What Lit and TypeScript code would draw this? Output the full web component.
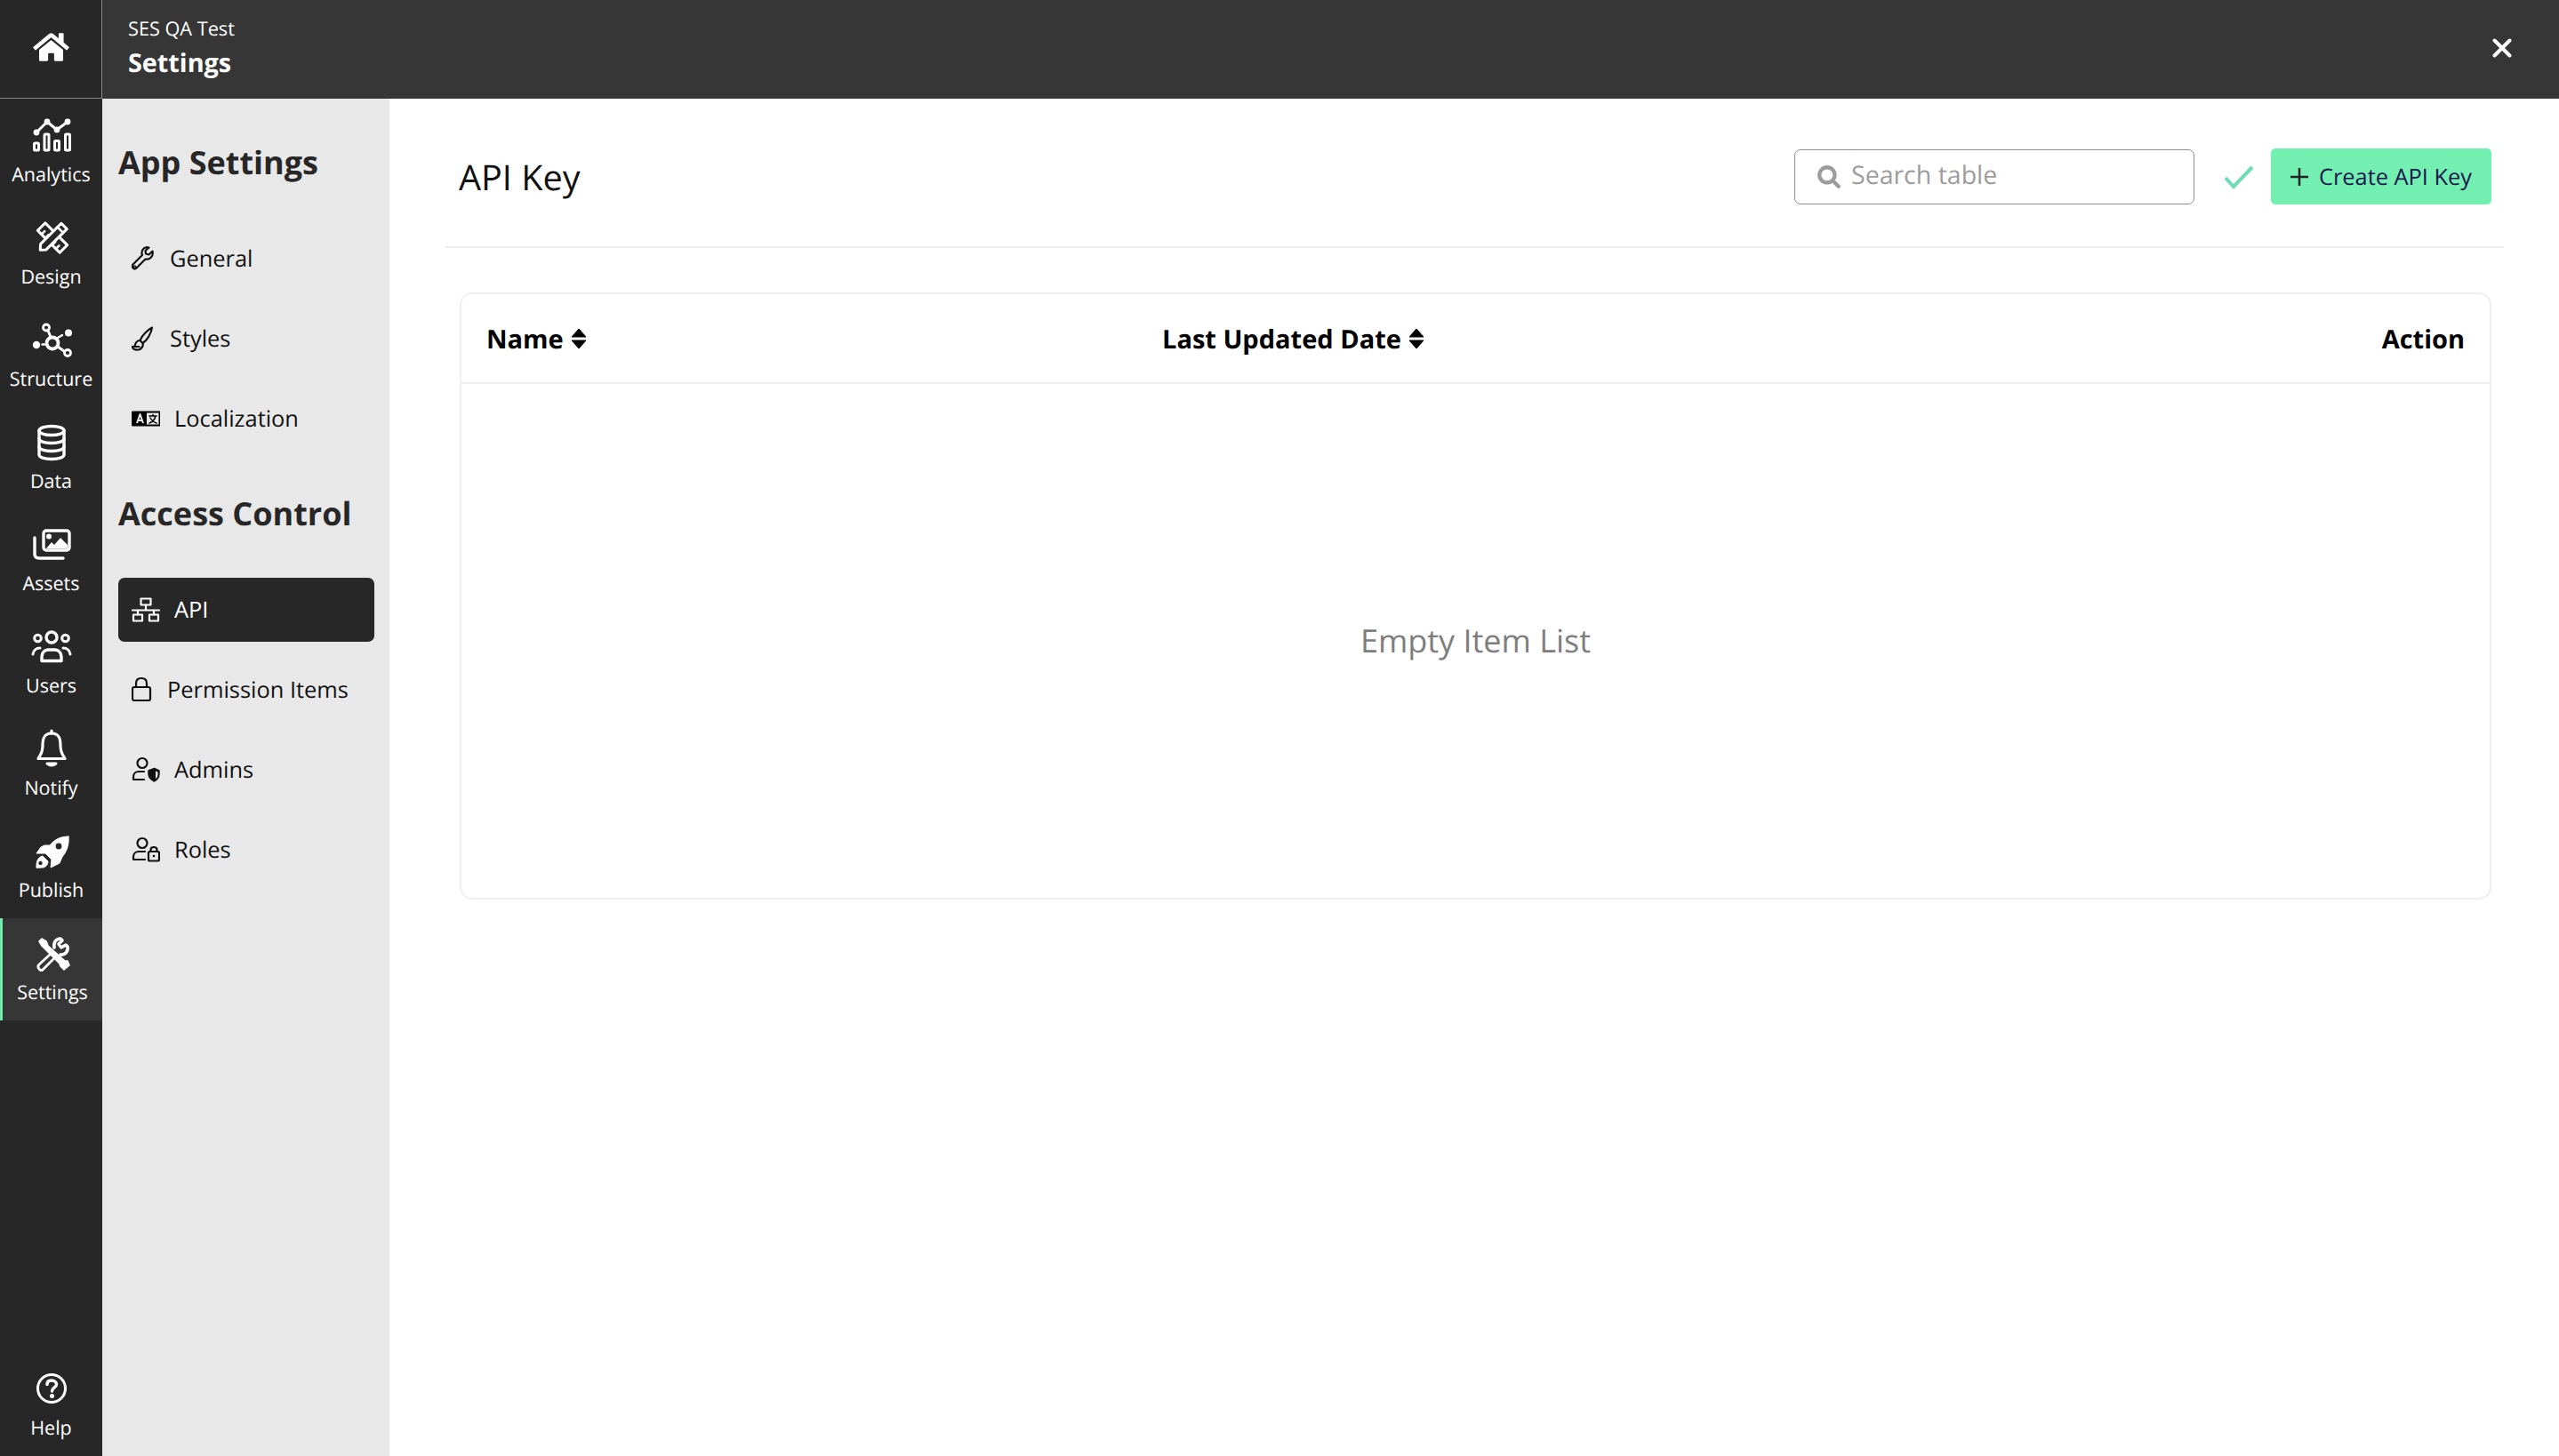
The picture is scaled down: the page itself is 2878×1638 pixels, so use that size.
import { LitElement, html, css, svg } from "lit";
import { customElement } from "lit/decorators.js";

const s = (c: any) => html`<svg class="ri" viewBox="0 0 48 48" width="48" height="48" fill="none" stroke="#fff" stroke-width="3" stroke-linecap="round" stroke-linejoin="round">${c}</svg>`;
const n = (w: number, c: any) => html`<svg class="si" viewBox="0 0 ${w} 30" width="${w}" height="30" fill="none" stroke="currentColor" stroke-width="2.2" stroke-linecap="round" stroke-linejoin="round">${c}</svg>`;

const railIcons: Record<string, any> = {
  Analytics: s(svg`
    <path d="M7 20 19 8 30 17 42 8" stroke-width="3"/>
    <g fill="#fff" stroke="none"><circle cx="7" cy="20" r="3.400"/><circle cx="19" cy="8" r="3.400"/><circle cx="30" cy="17" r="3.400"/><circle cx="42" cy="8" r="3.400"/></g>
    <g stroke-width="3" stroke-linejoin="round"><rect x="4.500" y="32" width="5" height="8" rx="1"/><rect x="16" y="22" width="5" height="18" rx="1"/><rect x="27.500" y="29.500" width="5" height="10.500" rx="1"/><rect x="39.500" y="22" width="5" height="18" rx="1"/></g>`),
  Design: s(svg`
    <g transform="rotate(-45 25 23.500)">
      <rect x="19" y="6" width="12" height="35" stroke-width="3"/>
      <path d="M19 12H24M19 18H24M19 29H24M19 35H24" stroke-width="2.600"/>
    </g>
    <g transform="rotate(-135 25 23.500)">
      <path d="M20.500 9 25 4 29.500 9V42H20.500Z" fill="#272727" stroke-width="3"/>
      <path d="M20.500 36H29.500" stroke-width="2.600"/>
    </g>`),
  Structure: s(svg`
    <circle cx="25" cy="27" r="6.500" stroke-width="3.800"/>
    <circle cx="18" cy="9.500" r="3.500" stroke-width="2.800"/><circle cx="43" cy="15.500" r="4" fill="#fff" stroke="none"/>
    <circle cx="42" cy="38" r="3.500" stroke-width="2.800"/><circle cx="7" cy="29" r="4.200" fill="#fff" stroke="none"/>
    <path d="M20 13 23 20M31 31 38 36" stroke-width="3"/><path d="M31 21 36 18M13.500 28.500H16" stroke-width="2.400"/>`),
  Data: s(svg`
    <ellipse cx="24" cy="10.500" rx="14" ry="5" stroke-width="3.400"/>
    <path d="M10 10.500V37.500C10 40.500 16 42.500 24 42.500S38 40.500 38 37.500V10.500" stroke-width="3.400"/>
    <path d="M10 19.500C10 22.500 16 24.500 24 24.500S38 22.500 38 19.500M10 28.500C10 31.500 16 33.500 24 33.500S38 31.500 38 28.500" stroke-width="3.400"/>`),
  Assets: s(svg`
    <g transform="translate(0 4)">
    <rect x="15" y="4" width="29" height="22" rx="3" stroke-width="3.400"/>
    <path d="M5 12 5 30Q5 35 10 35H37" stroke-width="3.400"/>
    <circle cx="21" cy="10.500" r="3" fill="#fff" stroke="none"/>
    <path d="M18 24 24 17 27 20 34 12 42 20V24Z" fill="#fff" stroke="none"/></g>`),
  Users: s(svg`
    <circle cx="24" cy="13" r="6" stroke-width="3.400"/><circle cx="8.500" cy="14" r="3.800" stroke-width="3"/><circle cx="39.500" cy="14" r="3.800" stroke-width="3"/>
    <path d="M13 39.500V35C13 30 16.500 27 20 27H28C31.500 27 35 30 35 35V39.500Z" stroke-width="3.400"/>
    <path d="M3 32C3.500 27.500 7 25 11 25M45 32C44.500 27.500 41 25 37 25" stroke-width="3"/>`),
  Notify: s(svg`
    <path d="M24 6C15 6 14 13 14 20 14 28 11 31 9 34.500H39C37 31 34 28 34 20 34 13 33 6 24 6Z" stroke-width="3.200"/>
    <path d="M24 3V6" stroke-width="3.200"/><path d="M19 40Q24 44 29 40Z" fill="#fff"/>`),
  Publish: s(svg`
    <path d="M43 7C33 7 27 11 22 17H16L12 19 7 26 17 26 24 33 23 42 33 37 36 30C41 24 44 16 43 7Z" fill="#fff" stroke-width="1"/>
    <circle cx="32" cy="18" r="3.400" fill="#272727" stroke="none"/>
    <path d="M7 42C6.500 35 9 30 14 29L20 35C20 38 18 42 14 42Z" fill="#fff" stroke-width="1"/>
    <circle cx="11.500" cy="37" r="2.200" fill="#272727" stroke="none"/>`),
  Settings: s(svg`
    <path d="M9 10 12 7 17 10 19 15 38 32 41 32 43 37 37 42 33 38 32 35 14 17 12 15Z" fill="#fff" stroke-width="1.600"/>
    <path d="M21 25 9 36C6 39 10 44 13 42L25 30" stroke-width="2.800"/>
    <path d="M26 17C25 11 28 7 33 7L35 9 31 13 34 17 39 14 41 16C42 21 38 26 33 25" stroke-width="3.600"/>`),
  Help: s(svg`
    <circle cx="24" cy="23" r="15.500" stroke-width="3"/>
    <path d="M19 18.500C19 15 21.500 14 24 14 27 14 29.500 16 29.500 18.500 29.500 22 24.500 22 24.500 26" stroke-width="3.500"/>
    <circle cx="24.500" cy="31.500" r="2.500" fill="#fff" stroke="none"/>`),
};

const navIcons: Record<string, any> = {
  General: n(27, svg`<g transform="translate(-1.500 0)"><path d="M25 6.500 21 10.500 17.500 9.500 17 6 21 2.500C17 1 12.500 4 13 9.500L13.500 11 3 21.500C1 24 4 28 6.500 26L17 15.500C22 16.500 26.500 12 25 6.500Z"/><circle cx="5" cy="24" r=".6"/></g>`),
  Styles: n(27, svg`<g transform="translate(-1.500 0)"><path d="M24.500 2.500C20 5 13 11 11 17L14 20C19 17 24 8 24.500 2.500Z"/><path d="M11 17C7 17 6 20 5.500 22 5 24 4 24.500 2.500 24 2.500 27 6 28 9 27.500 13 27 15 23 14 20" /><path d="M3 24H10"/></g>`),
  Localization: n(32, svg`<rect x="1" y="7" width="31" height="16" fill="#000" stroke="#000" stroke-width="1"/><rect x="17" y="8.500" width="13.500" height="13" fill="#e8e8e8" stroke="none"/><path d="M6 20 9.500 10 13 20M7 17H12" stroke="#e8e8e8" stroke-width="2" stroke-linecap="butt"/><path d="M20 12H28M24 10.500V12M27 12C26 16 23 19 20 20M21 14C22 16 25 19 28 20" stroke="#000" stroke-width="1.500"/>`),
  API: n(32, svg`<rect x="10.500" y="2.500" width="11" height="7"/><rect x="2" y="20.500" width="10" height="7"/><rect x="20" y="20.500" width="10" height="7"/><path d="M1 15.500H31M16 9.500V15.500M7 15.500V20.500M25 15.500V20.500"/>`),
  "Permission Items": n(24, svg`<g transform="translate(-1 0)"><rect x="2" y="12" width="20" height="15" rx="2"/><path d="M6 12V8C6 4 8.500 2 12 2S18 4 18 8V12"/></g>`),
  Admins: n(32, svg`<circle cx="12" cy="7.500" r="5.500"/><path d="M2 25V23C2 19 5 17 8 17H14M2 26H14"/><path d="M19 16 25.500 13.500 31 16V20C31 24 28 27 25.500 28 23 27 19 24 19 20Z" fill="currentColor" stroke-width="1.400"/><path d="M27 16.500 29.500 17.500V20C29.500 22.500 28.500 24 27 25Z" fill="#e8e8e8" stroke="none"/>`),
  Roles: n(32, svg`<circle cx="12" cy="7.500" r="5.500"/><path d="M2 25V23C2 19 5 17 8 17H15M2 26H15"/><rect x="19" y="17" width="12" height="10.500" rx="1.500"/><path d="M21.500 17V15C21.500 11 28.500 11 28.500 15V17"/><circle cx="25" cy="22" r="1.300" fill="currentColor" stroke="none"/>`),
};

const sortIcon = html`<svg class="sort" viewBox="0 0 18 24" width="18" height="24"><path d="M9 1 17 10H1ZM9 23 1 14H17Z" fill="#000" stroke="#000" stroke-linejoin="round"/></svg>`;

@customElement("app-root")
export class AppRoot extends LitElement {
  static styles = css`
    :host { display: flex; width: 100%; height: 1638px; overflow: hidden; background: #fff; font-family: "Open Sans", "Noto Sans", sans-serif; color: #000; text-rendering: geometricPrecision; }
    * { box-sizing: border-box; }
    .rail { width: 115px; flex: none; background: #272727; color: #fff; display: flex; flex-direction: column; }
    .home { height: 111px; margin-bottom: 2px; flex: none; border-right: 1px solid #8a8a8a; border-bottom: 1px solid #8a8a8a; display: flex; align-items: flex-start; justify-content: center; padding-top: 35px; }
    .ritem { height: 115px; flex: none; display: flex; flex-direction: column; align-items: center; padding-top: 16px; font-size: 21.5px; line-height: 30px; }
    .ritem span { margin-top: 5px; }
    .ri { display: block; flex: none; }
    .ritem.on { background: #363636; border-left: 3px solid #6fedac; }
    .ritem.help { margin-top: auto; height: 115px; padding-top: 16px; }
    .right { flex: 1; min-width: 0; display: flex; flex-direction: column; }
    .top { height: 111px; flex: none; background: #363636; color: #fff; padding: 16px 0 0 29px; display: flex; justify-content: space-between; }
    .app { font-size: 21.7px; line-height: 34px; }
    .page { font-size: 28.8px; line-height: 42px; font-weight: 700; }
    .close { margin: 27px 53px 0 0; display: block; }
    .body { flex: 1; display: flex; min-height: 0; }
    .side { width: 323px; flex: none; background: #e8e8e8; padding: 0 17px 0 18px; }
    .side h2 { margin: 0; font-size: 36px; line-height: 50px; font-weight: 700; color: #272727; }
    .side h2.h1 { padding-top: 47px; margin-bottom: 47px; }
    .side h2.h2 { margin-top: 46px; margin-bottom: 47px; }
    .nav { height: 72px; margin-bottom: 18px; border-radius: 7px; display: flex; align-items: center; padding-left: 15px; font-size: 25.4px; color: #111; }
    .nav.on { background: #272727; color: #fff; }
    .si { display: block; flex: none; }
    .nav span { margin-left: 16px; }
    .main { flex: 1; min-width: 0; padding: 0 62px 0 63px; }
    .head { height: 168px; border-bottom: 2px solid #ececec; display: flex; align-items: flex-start; padding: 56px 14px 0 15px; }
    .title { font-size: 39.6px; line-height: 64px; margin-right: auto; color: #111; }
    .search { width: 450px; height: 62px; margin-top: 1px; border: 1px solid #8f8f8f; border-radius: 7px; display: flex; align-items: center; padding: 0 0 4px 24px; color: #9c9c9c; font-size: 28.5px; }
    .search svg { margin-top: 3px; }
    .search span { margin-left: 11px; }
    .check { margin: 19px 19px 0 33px; display: block; }
    .create { width: 248px; height: 63px; background: #73f0b1; border-radius: 5px; display: flex; align-items: center; justify-content: center; font-size: 25.4px; color: #17184f; }
    .create svg { margin-right: 12px; }
    .table { margin: 50px 14px 0 16px; height: 683px; border: 2px solid #f0f0f0; border-radius: 14px; display: flex; flex-direction: column; }
    .thead { height: 101px; flex: none; border-bottom: 2px solid #eeeeee; display: flex; align-items: center; padding: 1px 28px 0; font-size: 29px; font-weight: 700; }
    .c1 { width: 760px; display: flex; align-items: center; }
    .c2 { display: flex; align-items: center; }
    .c3 { margin-left: auto; }
    .sort { margin-left: 8px; display: block; }
    .empty { flex: 1; display: flex; align-items: center; justify-content: center; padding-bottom: 2px; font-size: 36px; color: #7e7e7e; }
  `;

  private rail(name: string, cls = "") {
    return html`<div class="ritem ${cls}">${railIcons[name]}<span>${name}</span></div>`;
  }
  private nav(name: string, cls = "") {
    return html`<div class="nav ${cls}">${navIcons[name]}<span>${name}</span></div>`;
  }

  render() {
    return html`
      <div class="rail">
        <div class="home"><svg viewBox="0 0 576 512" width="41" height="36" fill="#fff"><path d="M280.37 148.26L96 300.11V464a16 16 0 0 0 16 16l112.06-.29a16 16 0 0 0 15.92-16V368a16 16 0 0 1 16-16h64a16 16 0 0 1 16 16v95.64a16 16 0 0 0 16 16.05L464 480a16 16 0 0 0 16-16V300L295.67 148.26a12.19 12.19 0 0 0-15.3 0zM571.6 251.47L488 182.56V44.05a12 12 0 0 0-12-12h-56a12 12 0 0 0-12 12v72.61L318.47 43a48 48 0 0 0-61 0L4.34 251.47a12 12 0 0 0-1.6 16.9l25.5 31A12 12 0 0 0 45.15 301l235.22-193.74a12.19 12.19 0 0 1 15.3 0L530.9 301a12 12 0 0 0 16.9-1.6l25.5-31a12 12 0 0 0-1.7-16.93z"/></svg></div>
        ${["Analytics", "Design", "Structure", "Data", "Assets", "Users", "Notify", "Publish"].map((x) => this.rail(x))}
        ${this.rail("Settings", "on")}
        ${this.rail("Help", "help")}
      </div>
      <div class="right">
        <div class="top">
          <div><div class="app">SES QA Test</div><div class="page">Settings</div></div>
          <svg class="close" viewBox="0 0 22 22" width="22" height="22" fill="none" stroke="#fff" stroke-width="4" stroke-linecap="round"><path d="M2.500 2.500 19.500 19.500M19.500 2.500 2.500 19.500"/></svg>
        </div>
        <div class="body">
          <div class="side">
            <h2 class="h1">App Settings</h2>
            ${this.nav("General")}${this.nav("Styles")}${this.nav("Localization")}
            <h2 class="h2">Access Control</h2>
            ${this.nav("API", "on")}${this.nav("Permission Items")}${this.nav("Admins")}${this.nav("Roles")}
          </div>
          <div class="main">
            <div class="head">
              <div class="title">API Key</div>
              <div class="search">
                <svg viewBox="0 0 26 26" width="28" height="28" fill="none" stroke="#9c9c9c" stroke-width="4" stroke-linecap="round"><circle cx="11" cy="11" r="8"/><path d="M17 17 23 23"/></svg>
                <span>Search table</span>
              </div>
              <svg class="check" viewBox="0 0 34 27" width="34" height="27" fill="none" stroke="#6edcb6" stroke-width="4"><path d="M2 14 11 24 32 2"/></svg>
              <div class="create">
                <svg viewBox="0 0 20 20" width="20" height="20" stroke="#222" stroke-width="2.500"><path d="M10 0V20M0 10H20"/></svg>
                <span>Create API Key</span>
              </div>
            </div>
            <div class="table">
              <div class="thead">
                <div class="c1">Name${sortIcon}</div>
                <div class="c2">Last Updated Date${sortIcon}</div>
                <div class="c3">Action</div>
              </div>
              <div class="empty">Empty Item List</div>
            </div>
          </div>
        </div>
      </div>
    `;
  }
}
